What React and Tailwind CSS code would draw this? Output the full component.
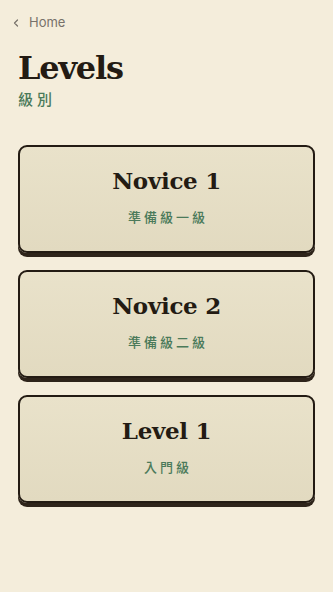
import React from 'react';

const levels = [
  { title: 'Novice 1', zh: '準備級一級' },
  { title: 'Novice 2', zh: '準備級二級' },
  { title: 'Level 1', zh: '入門級' },
];

export default function App() {
  return (
    <div className="min-h-[592px] w-full bg-[#f4eddb] px-[18px] pb-10">
      <button
        type="button"
        className="flex items-center gap-[9px] pt-[13px] text-[13px] text-[#77716a] font-['Inter',sans-serif]"
      >
        <svg className="w-[8px] h-[8px] -ml-[6px]" viewBox="0 0 8 8" fill="none" aria-hidden="true">
          <path d="M5.5 1 L2.5 4 L5.5 7" stroke="currentColor" strokeWidth="1.2" strokeLinecap="round" strokeLinejoin="round" />
        </svg>
        <span>Home</span>
      </button>

      <h1 className="mt-[15px] text-[32px] font-bold leading-[40px] tracking-[-1.2px] text-[#231b13] font-['DejaVu_Serif','Liberation_Serif',serif]">
        Levels
      </h1>
      <div className="mt-[1px] text-[15px] leading-[20px] tracking-[4px] text-[#4b7a5a] font-medium font-['Noto_Sans_CJK_TC',sans-serif]">
        級別
      </div>

      <div className="mt-[36px] flex flex-col gap-[17px]">
        {levels.map((lvl) => (
          <button
            key={lvl.title}
            type="button"
            className="flex h-[108px] w-full flex-col items-center justify-center pb-[5px] rounded-[9px] border-[2px] border-[#231b13] bg-gradient-to-b from-[#e9e2ca] to-[#e2dac0] shadow-[0_4px_0_#2e241a]"
          >
            <span className="text-[23px] font-bold leading-[28px] tracking-[-0.3px] text-[#231b13] font-['DejaVu_Serif','Liberation_Serif',serif]">
              {lvl.title}
            </span>
            <span className="mt-[13px] pl-[3px] text-[13px] leading-[18px] tracking-[3px] text-[#4b7a5a] font-medium font-['Noto_Sans_CJK_TC',sans-serif]">
              {lvl.zh}
            </span>
          </button>
        ))}
      </div>
    </div>
  );
}
